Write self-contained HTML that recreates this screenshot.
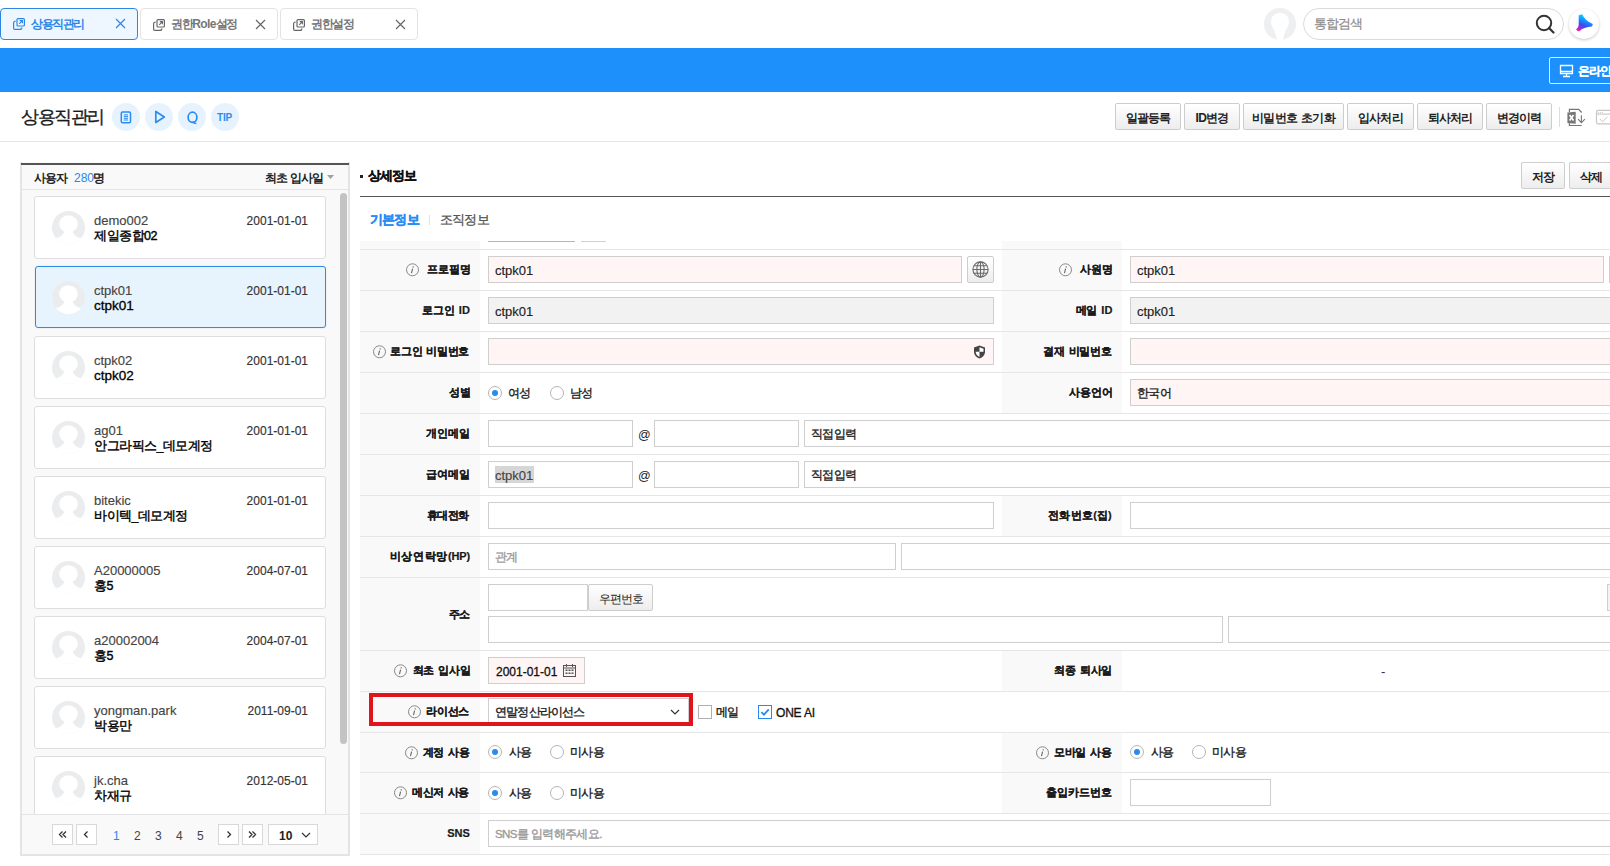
<!DOCTYPE html>
<html><head><meta charset="utf-8"><style>
*{box-sizing:border-box;margin:0;padding:0}
html,body{width:1610px;height:866px;overflow:hidden;background:#fff}
body{position:relative;font-family:"Liberation Sans",sans-serif;font-size:13px;color:#222}
.a{position:absolute}
.t{position:absolute;white-space:nowrap;line-height:1}
.tab{position:absolute;top:8px;height:32px;width:138px;border:1px solid #e3e3e3;border-radius:4px;background:#fff}
.tab.on{border:1.5px solid #2f86e0;background:#eef6ff}
.circ{position:absolute;top:103px;width:28px;height:28px;border-radius:50%;background:#e6f3fe}
.btn{position:absolute;height:27px;border:1px solid #cdcdcd;border-radius:2px;background:linear-gradient(#ffffff,#ededed);font-size:12px;font-weight:bold;color:#222;text-align:center;line-height:29px;letter-spacing:-0.8px;word-spacing:1.5px;white-space:nowrap}
.card{position:absolute;left:34px;width:292px;height:63px;background:#fff;border:1px solid #dedede;border-radius:3px}
.card.on{background:#e8f4fd;border:1px solid #2f8ae6;box-shadow:0 0 2px rgba(0,0,0,.12);margin-left:1px;width:291px;height:62px}
.card.on svg{left:16px}
.card.on .id,.card.on .nm{left:58px}
.card svg{position:absolute;left:17px;top:14px}
.card .id{position:absolute;left:59px;top:17px;font-size:13px;color:#444;-webkit-text-stroke:0.15px #444;line-height:1;white-space:nowrap}
.card .nm{position:absolute;left:59px;top:33px;font-size:12.5px;color:#000;-webkit-text-stroke:0.4px #000;line-height:1;letter-spacing:-0.5px;white-space:nowrap}
.card .nm.l{font-size:13.5px;letter-spacing:0;top:32px;-webkit-text-stroke:0.3px #000}
.card .dt{position:absolute;right:17px;top:18px;font-size:12px;color:#333;-webkit-text-stroke:0.15px #333;line-height:1}
.pg{position:absolute;top:824px;width:21px;height:21px;border:1px solid #d8d8d8;background:#fff}
.pn{position:absolute;top:830px;font-size:12px;color:#444;line-height:1}
.lt{position:absolute;font-size:11px;font-weight:bold;color:#1a1a1a;line-height:1;white-space:nowrap;letter-spacing:-0.7px;word-spacing:1.5px;-webkit-text-stroke:0.2px #1a1a1a}
.in{position:absolute;height:27px;border:1px solid #cfcfcf;background:#fff}
.in.rq{background:#fff5f5}
.in.ds{background:#f2f2f2}
.vt{position:absolute;font-size:13px;color:#1a1a1a;line-height:1;white-space:nowrap;-webkit-text-stroke:0.15px currentColor}
.vk{position:absolute;font-size:11.5px;color:#1a1a1a;line-height:1;white-space:nowrap;letter-spacing:-0.6px;-webkit-text-stroke:0.35px currentColor}
.rad{position:absolute;width:14px;height:14px;border:1px solid #b5b5b5;border-radius:50%;background:#fff}
.rad.on:after{content:"";position:absolute;left:3px;top:3px;width:6px;height:6px;border-radius:50%;background:#2a8af0}
</style></head><body>
<div class="tab on" style="left:0"><svg class="a" style="left:12px;top:9px" width="12" height="12" viewBox="0 0 12 12"><rect x="4" y="0.6" width="7.4" height="7.4" rx="1" fill="none" stroke="#2c86e8" stroke-width="1.2"/><path d="M2.6 3.2 Q0.6 3.2 0.6 5v5.2q0 1.2 1.2 1.2H7q1.8 0 1.8-2" fill="none" stroke="#2c86e8" stroke-width="1.2"/><path d="M6.2 5.8l3-3 M6.8 2.6h2.6v2.6" fill="none" stroke="#2c86e8" stroke-width="1.1"/></svg><span class="t" style="left:30px;top:9px;font-size:12px;color:#2c86e8;font-weight:bold;letter-spacing:-1.5px">상용직관리</span><svg class="a" style="left:114px;top:9px" width="11" height="11" viewBox="0 0 11 11"><path d="M1 1l9 9M10 1l-9 9" stroke="#2c86e8" stroke-width="1.2"/></svg></div>
<div class="tab" style="left:140px"><svg class="a" style="left:12px;top:10px" width="12" height="12" viewBox="0 0 12 12"><rect x="4" y="0.6" width="7.4" height="7.4" rx="1" fill="none" stroke="#666" stroke-width="1.2"/><path d="M2.6 3.2 Q0.6 3.2 0.6 5v5.2q0 1.2 1.2 1.2H7q1.8 0 1.8-2" fill="none" stroke="#666" stroke-width="1.2"/><path d="M6.2 5.8l3-3 M6.8 2.6h2.6v2.6" fill="none" stroke="#666" stroke-width="1.1"/></svg><span class="t" style="left:30px;top:9px;font-size:12px;color:#777;font-weight:bold;letter-spacing:-1.4px">권한<span style="letter-spacing:-0.6px">Role</span>설정</span><svg class="a" style="left:114px;top:10px" width="11" height="11" viewBox="0 0 11 11"><path d="M1 1l9 9M10 1l-9 9" stroke="#666" stroke-width="1.2"/></svg></div>
<div class="tab" style="left:280px"><svg class="a" style="left:12px;top:10px" width="12" height="12" viewBox="0 0 12 12"><rect x="4" y="0.6" width="7.4" height="7.4" rx="1" fill="none" stroke="#666" stroke-width="1.2"/><path d="M2.6 3.2 Q0.6 3.2 0.6 5v5.2q0 1.2 1.2 1.2H7q1.8 0 1.8-2" fill="none" stroke="#666" stroke-width="1.2"/><path d="M6.2 5.8l3-3 M6.8 2.6h2.6v2.6" fill="none" stroke="#666" stroke-width="1.1"/></svg><span class="t" style="left:30px;top:9px;font-size:12px;color:#777;font-weight:bold;letter-spacing:-1.4px">권한설정</span><svg class="a" style="left:114px;top:10px" width="11" height="11" viewBox="0 0 11 11"><path d="M1 1l9 9M10 1l-9 9" stroke="#666" stroke-width="1.2"/></svg></div>
<svg class="a" style="left:1264px;top:8px" width="32" height="32" viewBox="0 0 32 32"><defs><clipPath id="cc"><circle cx="16" cy="16" r="16"/></clipPath></defs><circle cx="16" cy="16" r="16" fill="#eeeff1"/><g clip-path="url(#cc)" fill="#fff"><path d="M16 5C21 5 25 8.5 25 13.5C25 17 23.5 19 22 22C20.5 25 19.5 28 19.5 33L12.5 33C12.5 28 11.5 25 10 22C8.5 19 7 17 7 13.5C7 8.5 11 5 16 5z"/></g></svg>
<div class="a" style="left:1303px;top:8px;width:261px;height:32px;border:1px solid #dadada;border-radius:16px;background:#fff"></div>
<span class="t" style="left:1314px;top:17px;font-size:13px;color:#8c8c8c;letter-spacing:-0.9px;-webkit-text-stroke:0.2px #8c8c8c;">통합검색</span>
<svg class="a" style="left:1534px;top:13px" width="22" height="22" viewBox="0 0 22 22"><circle cx="10" cy="10" r="7.2" fill="none" stroke="#333" stroke-width="2"/><path d="M15 15l4.5 4.5" stroke="#333" stroke-width="2.2" stroke-linecap="round"/></svg>
<div class="a" style="left:1569px;top:9px;width:30px;height:30px;border-radius:50%;background:#fff;box-shadow:0 1px 3px rgba(0,0,0,.22)"></div>
<svg class="a" style="left:1574px;top:14px" width="20" height="20" viewBox="0 0 20 20"><defs><linearGradient id="lg1" x1="0.55" y1="0" x2="0.15" y2="1"><stop offset="0" stop-color="#00eaff"/><stop offset=".38" stop-color="#1e86ff"/><stop offset=".6" stop-color="#3550f2"/><stop offset=".82" stop-color="#a82ad8"/><stop offset="1" stop-color="#ff1f8a"/></linearGradient></defs><path d="M4.7 1.6 Q6.5 0 8.4 0.6 Q11 7 18.8 9.9 Q18.5 12 17.7 12.5 Q10 13 5.3 17.2 Q3.5 17.5 2.1 15.6 Q4.7 13 4.7 11 z" fill="url(#lg1)"/></svg>
<div class="a" style="left:0px;top:48px;width:1610px;height:44px;background:#1e90fb;"></div>
<div class="a" style="left:1549px;top:57px;width:80px;height:27px;border:1px solid rgba(255,255,255,.85);border-radius:2px"></div>
<svg class="a" style="left:1559px;top:64px" width="15" height="14" viewBox="0 0 15 14"><path d="M1.5 1.5h12v8h-12z" fill="none" stroke="#fff" stroke-width="1.3"/><path d="M1.5 7.5h12 M7.5 9.5v3 M4 12.5h7" fill="none" stroke="#fff" stroke-width="1.3"/></svg>
<span class="t" style="left:1578px;top:65px;font-size:12px;color:#fff;font-weight:bold;letter-spacing:-1px;-webkit-text-stroke:0.2px #fff;">온라인</span>
<span class="t" style="left:21px;top:108px;font-size:18px;color:#1a1a1a;letter-spacing:-1.5px;-webkit-text-stroke:0.35px #1a1a1a;">상용직관리</span>
<div class="circ" style="left:112px"><svg class="a" style="left:8px;top:8px" width="12" height="14" viewBox="0 0 12 14"><rect x="1.3" y="0.9" width="9.2" height="10.9" rx="1.3" fill="none" stroke="#2a8cf0" stroke-width="1.5"/><path d="M3.8 3.9h4.2M3.8 5.6h4.2M3.8 7.3h4.2M3.8 9h4.2" stroke="#2a8cf0" stroke-width="1"/></svg></div>
<div class="circ" style="left:145px"><svg class="a" style="left:9px;top:7px" width="12" height="14" viewBox="0 0 12 14"><path d="M1.8 1.5v11l8.5-5.5z" fill="none" stroke="#2a8cf0" stroke-width="1.7" stroke-linejoin="round"/></svg></div>
<div class="circ" style="left:178px"><svg class="a" style="left:7px;top:7px" width="14" height="15" viewBox="0 0 14 15"><ellipse cx="7.5" cy="7.3" rx="4.4" ry="5.1" fill="none" stroke="#2a8cf0" stroke-width="1.7"/><path d="M7.5 11.8q1.5 1.7 3.8 1.7" fill="none" stroke="#2a8cf0" stroke-width="1.5"/></svg></div>
<div class="circ" style="left:211px"><span class="t" style="left:6px;top:10px;font-size:10px;font-weight:bold;color:#2a8cf0;letter-spacing:-0.2px">TIP</span></div>
<div class="btn" style="left:1115px;top:103px;width:66px">일괄등록</div>
<div class="btn" style="left:1184px;top:103px;width:56px">ID변경</div>
<div class="btn" style="left:1243px;top:103px;width:101px">비밀번호 초기화</div>
<div class="btn" style="left:1347px;top:103px;width:67px">입사처리</div>
<div class="btn" style="left:1417px;top:103px;width:66px">퇴사처리</div>
<div class="btn" style="left:1486px;top:103px;width:66px">변경이력</div>
<div class="a" style="left:1559px;top:107px;width:1px;height:20px;background:#dcdcdc;"></div>
<svg class="a" style="left:1566px;top:108px" width="20" height="19" viewBox="0 0 20 19"><path d="M3.4 4V1.3H12.7L15.7 4.5M3.4 14V17.5H15.7" fill="none" stroke="#777" stroke-width="1.2"/><path d="M1.4 4.4L9.7 3.7V15.7L1.4 15z" fill="#777"/><path d="M3.6 6.9L7.5 12.4M7.5 6.9L3.6 12.4" stroke="#fff" stroke-width="1.7"/><path d="M15.4 7.2V14.6M12.1 11.2L15.4 14.6L18.9 11.2" fill="none" stroke="#777" stroke-width="1.1"/></svg>
<svg class="a" style="left:1595px;top:109px" width="15" height="17" viewBox="0 0 15 17"><rect x="1.5" y="1.3" width="20" height="13.5" rx="1.5" fill="none" stroke="#c6c6c6" stroke-width="1.2"/><path d="M1.5 5.1H21.5" stroke="#c6c6c6" stroke-width="1.1"/><g fill="#c6c6c6"><circle cx="3.5" cy="3.3" r="0.6"/><circle cx="5.5" cy="3.3" r="0.6"/><circle cx="7.5" cy="3.3" r="0.6"/></g><path d="M4.9 10L7.5 12.8L12.4 8" fill="none" stroke="#c6c6c6" stroke-width="1"/></svg>
<div class="a" style="left:0px;top:141px;width:1610px;height:1px;background:#e6e6e6;"></div>
<div class="a" style="left:20px;top:162px;width:330px;height:694px;background:#f9f9f9;"></div>
<div class="a" style="left:20px;top:162px;width:2px;height:694px;background:#e4e4e4;"></div>
<div class="a" style="left:348px;top:162px;width:2px;height:694px;background:#e4e4e4;"></div>
<div class="a" style="left:20px;top:854px;width:330px;height:2px;background:#e4e4e4;"></div>
<div class="a" style="left:21px;top:163px;width:328px;height:2px;background:#555;"></div>
<span class="t" style="left:34px;top:172px;font-size:12px;color:#222;font-weight:bold;letter-spacing:-0.9px;">사용자</span>
<span class="t" style="left:74px;top:172px;font-size:12px;color:#2c86e8;">280</span>
<span class="t" style="left:93px;top:172px;font-size:12px;color:#222;font-weight:bold;">명</span>
<span class="t" style="left:265px;top:172px;font-size:12px;color:#222;font-weight:bold;letter-spacing:-0.9px;">최초 입사일</span>
<svg class="a" style="left:327px;top:175px" width="7" height="4" viewBox="0 0 7 4"><path d="M0 0h7L3.5 4z" fill="#a0a0a0"/></svg>
<div class="a" style="left:22px;top:189px;width:326px;height:1px;background:#e4e4e4;"></div>
<div class="a" style="left:0;top:190px;width:340px;height:624px;overflow:hidden">
<div class="card" style="top:6px"><svg width="33" height="33" viewBox="0 0 32 32"><defs><clipPath id="ac"><circle cx="16" cy="16" r="16"/></clipPath></defs><circle cx="16" cy="16" r="16" fill="#ebecee"/><g fill="#fff" clip-path="url(#ac)"><ellipse cx="16" cy="12.5" rx="9" ry="8.5"/><path d="M12.5 19 L19.5 19 Q21 24 27 26.5 L5 26.5 Q11 24 12.5 19z"/><rect x="0" y="26" width="32" height="7"/></g></svg><span class="id">demo002</span><span class="nm">제일종합02</span><span class="dt">2001-01-01</span></div>
<div class="card on" style="top:76px"><svg width="33" height="33" viewBox="0 0 32 32"><defs><clipPath id="ac"><circle cx="16" cy="16" r="16"/></clipPath></defs><circle cx="16" cy="16" r="16" fill="#ebecee"/><g fill="#fff" clip-path="url(#ac)"><ellipse cx="16" cy="12.5" rx="9" ry="8.5"/><path d="M12.5 19 L19.5 19 Q21 24 27 26.5 L5 26.5 Q11 24 12.5 19z"/><rect x="0" y="26" width="32" height="7"/></g></svg><span class="id">ctpk01</span><span class="nm l">ctpk01</span><span class="dt">2001-01-01</span></div>
<div class="card" style="top:146px"><svg width="33" height="33" viewBox="0 0 32 32"><defs><clipPath id="ac"><circle cx="16" cy="16" r="16"/></clipPath></defs><circle cx="16" cy="16" r="16" fill="#ebecee"/><g fill="#fff" clip-path="url(#ac)"><ellipse cx="16" cy="12.5" rx="9" ry="8.5"/><path d="M12.5 19 L19.5 19 Q21 24 27 26.5 L5 26.5 Q11 24 12.5 19z"/><rect x="0" y="26" width="32" height="7"/></g></svg><span class="id">ctpk02</span><span class="nm l">ctpk02</span><span class="dt">2001-01-01</span></div>
<div class="card" style="top:216px"><svg width="33" height="33" viewBox="0 0 32 32"><defs><clipPath id="ac"><circle cx="16" cy="16" r="16"/></clipPath></defs><circle cx="16" cy="16" r="16" fill="#ebecee"/><g fill="#fff" clip-path="url(#ac)"><ellipse cx="16" cy="12.5" rx="9" ry="8.5"/><path d="M12.5 19 L19.5 19 Q21 24 27 26.5 L5 26.5 Q11 24 12.5 19z"/><rect x="0" y="26" width="32" height="7"/></g></svg><span class="id">ag01</span><span class="nm">안그라픽스_데모계정</span><span class="dt">2001-01-01</span></div>
<div class="card" style="top:286px"><svg width="33" height="33" viewBox="0 0 32 32"><defs><clipPath id="ac"><circle cx="16" cy="16" r="16"/></clipPath></defs><circle cx="16" cy="16" r="16" fill="#ebecee"/><g fill="#fff" clip-path="url(#ac)"><ellipse cx="16" cy="12.5" rx="9" ry="8.5"/><path d="M12.5 19 L19.5 19 Q21 24 27 26.5 L5 26.5 Q11 24 12.5 19z"/><rect x="0" y="26" width="32" height="7"/></g></svg><span class="id">bitekic</span><span class="nm">바이텍_데모계정</span><span class="dt">2001-01-01</span></div>
<div class="card" style="top:356px"><svg width="33" height="33" viewBox="0 0 32 32"><defs><clipPath id="ac"><circle cx="16" cy="16" r="16"/></clipPath></defs><circle cx="16" cy="16" r="16" fill="#ebecee"/><g fill="#fff" clip-path="url(#ac)"><ellipse cx="16" cy="12.5" rx="9" ry="8.5"/><path d="M12.5 19 L19.5 19 Q21 24 27 26.5 L5 26.5 Q11 24 12.5 19z"/><rect x="0" y="26" width="32" height="7"/></g></svg><span class="id">A20000005</span><span class="nm">홍5</span><span class="dt">2004-07-01</span></div>
<div class="card" style="top:426px"><svg width="33" height="33" viewBox="0 0 32 32"><defs><clipPath id="ac"><circle cx="16" cy="16" r="16"/></clipPath></defs><circle cx="16" cy="16" r="16" fill="#ebecee"/><g fill="#fff" clip-path="url(#ac)"><ellipse cx="16" cy="12.5" rx="9" ry="8.5"/><path d="M12.5 19 L19.5 19 Q21 24 27 26.5 L5 26.5 Q11 24 12.5 19z"/><rect x="0" y="26" width="32" height="7"/></g></svg><span class="id">a20002004</span><span class="nm">홍5</span><span class="dt">2004-07-01</span></div>
<div class="card" style="top:496px"><svg width="33" height="33" viewBox="0 0 32 32"><defs><clipPath id="ac"><circle cx="16" cy="16" r="16"/></clipPath></defs><circle cx="16" cy="16" r="16" fill="#ebecee"/><g fill="#fff" clip-path="url(#ac)"><ellipse cx="16" cy="12.5" rx="9" ry="8.5"/><path d="M12.5 19 L19.5 19 Q21 24 27 26.5 L5 26.5 Q11 24 12.5 19z"/><rect x="0" y="26" width="32" height="7"/></g></svg><span class="id">yongman.park</span><span class="nm">박용만</span><span class="dt">2011-09-01</span></div>
<div class="card" style="top:566px"><svg width="33" height="33" viewBox="0 0 32 32"><defs><clipPath id="ac"><circle cx="16" cy="16" r="16"/></clipPath></defs><circle cx="16" cy="16" r="16" fill="#ebecee"/><g fill="#fff" clip-path="url(#ac)"><ellipse cx="16" cy="12.5" rx="9" ry="8.5"/><path d="M12.5 19 L19.5 19 Q21 24 27 26.5 L5 26.5 Q11 24 12.5 19z"/><rect x="0" y="26" width="32" height="7"/></g></svg><span class="id">jk.cha</span><span class="nm">차재규</span><span class="dt">2012-05-01</span></div>
</div>
<div class="a" style="left:340px;top:193px;width:7px;height:551px;background:#c3c3c3;border-radius:4px"></div>
<div class="a" style="left:22px;top:814px;width:326px;height:1px;background:#e4e4e4;"></div>
<div class="pg" style="left:52px"><svg class="a" style="left:4px;top:4px" width="11" height="11" viewBox="0 0 11 11"><path d="M5.5 2.5L2.5 5.5l3 3M9 2.5L6 5.5l3 3" fill="none" stroke="#333" stroke-width="1.3"/></svg></div>
<div class="pg" style="left:76px"><svg class="a" style="left:4px;top:4px" width="11" height="11" viewBox="0 0 11 11"><path d="M6.5 2.5l-3 3 3 3" fill="none" stroke="#333" stroke-width="1.3"/></svg></div>
<div class="pg" style="left:218px"><svg class="a" style="left:4px;top:4px" width="11" height="11" viewBox="0 0 11 11"><path d="M4.5 2.5l3 3-3 3" fill="none" stroke="#333" stroke-width="1.3"/></svg></div>
<div class="pg" style="left:242px"><svg class="a" style="left:4px;top:4px" width="11" height="11" viewBox="0 0 11 11"><path d="M2 2.5l3 3-3 3M5.5 2.5l3 3-3 3" fill="none" stroke="#333" stroke-width="1.3"/></svg></div>
<span class="pn" style="left:113px;color:#2c86e8">1</span>
<span class="pn" style="left:134px;color:#444">2</span>
<span class="pn" style="left:155px;color:#444">3</span>
<span class="pn" style="left:176px;color:#444">4</span>
<span class="pn" style="left:197px;color:#444">5</span>
<div class="pg" style="left:268px;width:50px"><span class="t" style="left:10px;top:5px;font-size:12px;font-weight:bold;color:#222">10</span><svg class="a" style="left:32px;top:7px" width="10" height="6" viewBox="0 0 10 6"><path d="M1 1l4 4 4-4" fill="none" stroke="#333" stroke-width="1.2"/></svg></div>
<div class="a" style="left:360px;top:175px;width:3px;height:3px;background:#222;"></div>
<span class="t" style="left:368px;top:169px;font-size:13px;color:#111;font-weight:bold;letter-spacing:-0.9px;-webkit-text-stroke:0.3px #111;">상세정보</span>
<div class="btn" style="left:1521px;top:162px;width:44px;height:27px">저장</div>
<div class="btn" style="left:1569px;top:162px;width:44px;height:27px">삭제</div>
<div class="a" style="left:360px;top:196px;width:1250px;height:1px;background:#555;"></div>
<span class="t" style="left:370px;top:213px;font-size:13px;color:#2a8cf5;font-weight:bold;letter-spacing:-0.8px;-webkit-text-stroke:0.3px #2a8cf5;">기본정보</span>
<div class="a" style="left:429px;top:215px;width:1px;height:10px;background:#e2e2e2;"></div>
<span class="t" style="left:440px;top:213px;font-size:13px;color:#555;letter-spacing:-0.8px;-webkit-text-stroke:0.3px #555;">조직정보</span>
<div class="a" style="left:360px;top:241px;width:120px;height:613px;background:#f9f9f9;"></div>
<div class="a" style="left:1002px;top:250px;width:120px;height:40px;background:#f9f9f9;"></div>
<div class="a" style="left:1002px;top:291px;width:120px;height:40px;background:#f9f9f9;"></div>
<div class="a" style="left:1002px;top:332px;width:120px;height:40px;background:#f9f9f9;"></div>
<div class="a" style="left:1002px;top:373px;width:120px;height:40px;background:#f9f9f9;"></div>
<div class="a" style="left:1002px;top:496px;width:120px;height:40px;background:#f9f9f9;"></div>
<div class="a" style="left:1002px;top:651px;width:120px;height:40px;background:#f9f9f9;"></div>
<div class="a" style="left:1002px;top:733px;width:120px;height:39px;background:#f9f9f9;"></div>
<div class="a" style="left:1002px;top:773px;width:120px;height:40px;background:#f9f9f9;"></div>
<div class="a" style="left:1002px;top:241px;width:120px;height:8px;background:#f9f9f9;"></div>
<div class="a" style="left:488px;top:241px;width:87px;height:1px;background:#b5b5b5;"></div>
<div class="a" style="left:581px;top:241px;width:25px;height:1px;background:#d0d0d0;"></div>
<div class="a" style="left:360px;top:249px;width:1250px;height:1px;background:#e6e6e6;"></div>
<div class="a" style="left:360px;top:290px;width:1250px;height:1px;background:#e6e6e6;"></div>
<div class="a" style="left:360px;top:331px;width:1250px;height:1px;background:#e6e6e6;"></div>
<div class="a" style="left:360px;top:372px;width:1250px;height:1px;background:#e6e6e6;"></div>
<div class="a" style="left:360px;top:413px;width:1250px;height:1px;background:#e6e6e6;"></div>
<div class="a" style="left:360px;top:454px;width:1250px;height:1px;background:#e6e6e6;"></div>
<div class="a" style="left:360px;top:495px;width:1250px;height:1px;background:#e6e6e6;"></div>
<div class="a" style="left:360px;top:536px;width:1250px;height:1px;background:#e6e6e6;"></div>
<div class="a" style="left:360px;top:577px;width:1250px;height:1px;background:#e6e6e6;"></div>
<div class="a" style="left:360px;top:650px;width:1250px;height:1px;background:#e6e6e6;"></div>
<div class="a" style="left:360px;top:691px;width:1250px;height:1px;background:#e6e6e6;"></div>
<div class="a" style="left:360px;top:732px;width:1250px;height:1px;background:#e6e6e6;"></div>
<div class="a" style="left:360px;top:772px;width:1250px;height:1px;background:#e6e6e6;"></div>
<div class="a" style="left:360px;top:813px;width:1250px;height:1px;background:#e6e6e6;"></div>
<div class="a" style="left:360px;top:854px;width:1250px;height:1px;background:#e6e6e6;"></div>
<span class="lt" style="right:1139.36px;top:264px;letter-spacing:-0.02px">프로필명</span>
<svg class="a" style="left:406px;top:262.5px" width="14" height="14" viewBox="0 0 14 14"><circle cx="6.5" cy="6.8" r="6" fill="none" stroke="#888" stroke-width="1"/><path d="M7.3 3.3l-0.15 1" stroke="#666" stroke-width="1.3"/><path d="M6.6 5.6l-1.1 4.6" stroke="#666" stroke-width="1.1"/></svg>
<div class="in rq" style="left:488px;top:256px;width:474px;height:27px"></div>
<span class="vt" style="left:495px;top:264px;color:#222">ctpk01</span>
<div class="btn" style="left:967px;top:256px;width:27px;height:27px"></div>
<svg class="a" style="left:971px;top:260px" width="19" height="19" viewBox="0 0 19 19"><g fill="none" stroke="#6a6a6a" stroke-width="1.1"><circle cx="9.5" cy="9.5" r="7.6"/><ellipse cx="9.5" cy="9.5" rx="3.6" ry="7.6"/><path d="M1.9 9.5h15.2M3 5.7h13M3 13.3h13M9.5 1.9v15.2"/></g></svg>
<span class="lt" style="right:496.8800000000003px;top:264px;letter-spacing:0.06px">사원명</span>
<svg class="a" style="left:1059px;top:262.5px" width="14" height="14" viewBox="0 0 14 14"><circle cx="6.5" cy="6.8" r="6" fill="none" stroke="#888" stroke-width="1"/><path d="M7.3 3.3l-0.15 1" stroke="#666" stroke-width="1.3"/><path d="M6.6 5.6l-1.1 4.6" stroke="#666" stroke-width="1.1"/></svg>
<div class="in rq" style="left:1130px;top:256px;width:474px;height:27px"></div>
<span class="vt" style="left:1137px;top:264px;color:#222">ctpk01</span>
<div class="in" style="left:1609px;top:256px;width:10px;height:27px;background:#f3f3f3"></div>
<span class="lt" style="right:1140.1599999999999px;top:305px;letter-spacing:-0.276px">로그인 <span style="letter-spacing:0">ID</span></span>
<div class="in ds" style="left:488px;top:297px;width:506px;height:27px"></div>
<span class="vt" style="left:495px;top:305px;color:#222">ctpk01</span>
<span class="lt" style="right:497.6800000000003px;top:305px;letter-spacing:-0.339px">메일 <span style="letter-spacing:0">ID</span></span>
<div class="in ds" style="left:1130px;top:297px;width:490px;height:27px"></div>
<span class="vt" style="left:1137px;top:305px;color:#222">ctpk01</span>
<span class="lt" style="right:1140.9599999999998px;top:346px;letter-spacing:-0.341px">로그인 비밀번호</span>
<svg class="a" style="left:373px;top:344.5px" width="14" height="14" viewBox="0 0 14 14"><circle cx="6.5" cy="6.8" r="6" fill="none" stroke="#888" stroke-width="1"/><path d="M7.3 3.3l-0.15 1" stroke="#666" stroke-width="1.3"/><path d="M6.6 5.6l-1.1 4.6" stroke="#666" stroke-width="1.1"/></svg>
<div class="in rq" style="left:488px;top:338px;width:506px;height:27px"></div>
<svg class="a" style="left:973px;top:345px" width="13" height="14" viewBox="0 0 13 14"><path d="M6.5 0.6L12 2.6v4.2c0 3.3-2.4 5.7-5.5 6.7C3.4 12.5 1 10.1 1 6.8V2.6z" fill="#444"/><path d="M6.5 2.3l4 1.5v3H6.5z M6.5 6.8v5.1C4.5 11 2.8 9.3 2.6 6.8z" fill="#fff"/></svg>
<span class="lt" style="right:498.4800000000003px;top:346px;letter-spacing:-0.314px">결재 비밀번호</span>
<div class="in rq" style="left:1130px;top:338px;width:490px;height:27px"></div>
<span class="lt" style="right:1138.5599999999997px;top:387px;letter-spacing:0.46px">성별</span>
<div class="rad on" style="left:488px;top:386px"></div>
<span class="vk" style="left:508px;top:388px">여성</span>
<div class="rad" style="left:550px;top:386px"></div>
<span class="vk" style="left:570px;top:388px">남성</span>
<span class="lt" style="right:496.8800000000003px;top:387px;letter-spacing:0.087px">사용언어</span>
<div class="in rq" style="left:1130px;top:379px;width:490px;height:27px"></div>
<span class="vk" style="left:1137px;top:388px;color:#222">한국어</span>
<span class="lt" style="right:1139.36px;top:428px;letter-spacing:0.141px">개인메일</span>
<div class="in " style="left:488px;top:420px;width:145px;height:27px"></div>
<span class="t" style="left:638px;top:429px;font-size:12.5px;color:#222;">@</span>
<div class="in " style="left:654px;top:420px;width:145px;height:27px"></div>
<div class="in " style="left:804px;top:420px;width:816px;height:27px"></div>
<span class="vk" style="left:811px;top:429px;color:#222">직접입력</span>
<span class="lt" style="right:1139.36px;top:469px;letter-spacing:0.141px">급여메일</span>
<div class="in " style="left:488px;top:461px;width:145px;height:27px"></div>
<div class="a" style="left:495px;top:466px;width:39px;height:17px;background:#d6d6d6;"></div>
<span class="vt" style="left:495px;top:469px;color:#444">ctpk01</span>
<span class="t" style="left:638px;top:470px;font-size:12.5px;color:#222;">@</span>
<div class="in " style="left:654px;top:461px;width:145px;height:27px"></div>
<div class="in " style="left:804px;top:461px;width:816px;height:27px"></div>
<span class="vk" style="left:811px;top:470px;color:#222">직접입력</span>
<span class="lt" style="right:1140.9599999999998px;top:510px;letter-spacing:-0.393px">휴대전화</span>
<div class="in " style="left:488px;top:502px;width:506px;height:27px"></div>
<span class="lt" style="right:498.4800000000003px;top:510px;letter-spacing:0.3px">전화번호<span style="letter-spacing:-0.2px">(</span>집<span style="letter-spacing:-0.2px">)</span></span>
<div class="in " style="left:1130px;top:502px;width:490px;height:27px"></div>
<span class="lt" style="right:1140.1599999999999px;top:551px;letter-spacing:0.64px">비상연락망<span style="letter-spacing:-0.2px">(HP)</span></span>
<div class="in " style="left:488px;top:543px;width:408px;height:27px"></div>
<span class="vk" style="left:495px;top:552px;color:#9a9a9a">관계</span>
<div class="in " style="left:901px;top:543px;width:719px;height:27px"></div>
<span class="lt" style="right:1140.8px;top:609px">주소</span>
<div class="in " style="left:488px;top:584px;width:100px;height:27px"></div>
<div class="btn" style="left:588px;top:584px;width:65px;height:27px;font-weight:normal;letter-spacing:-1px">우편번호</div>
<div class="in " style="left:488px;top:616px;width:735px;height:27px"></div>
<div class="in " style="left:1228px;top:616px;width:392px;height:27px"></div>
<div class="in" style="left:1607px;top:584px;width:10px;height:27px;background:#f3f3f3"></div>
<span class="lt" style="right:1139.36px;top:665px;letter-spacing:-0.244px">최초 입사일</span>
<svg class="a" style="left:394px;top:663.5px" width="14" height="14" viewBox="0 0 14 14"><circle cx="6.5" cy="6.8" r="6" fill="none" stroke="#888" stroke-width="1"/><path d="M7.3 3.3l-0.15 1" stroke="#666" stroke-width="1.3"/><path d="M6.6 5.6l-1.1 4.6" stroke="#666" stroke-width="1.1"/></svg>
<div class="in rq" style="left:488px;top:657px;width:97px;height:27px"></div>
<span class="t" style="left:496px;top:666px;font-size:12px;color:#111;-webkit-text-stroke:0.3px #111;">2001-01-01</span>
<svg class="a" style="left:562px;top:663px" width="15" height="15" viewBox="0 0 15 15"><g fill="none" stroke="#555" stroke-width="1"><rect x="1.5" y="2.5" width="12" height="11"/><path d="M1.5 5h12M4.5 1v3M10.5 1v3"/></g><g fill="#555"><rect x="3.5" y="6.5" width="2" height="1.5"/><rect x="6.5" y="6.5" width="2" height="1.5"/><rect x="9.5" y="6.5" width="2" height="1.5"/><rect x="3.5" y="9.5" width="2" height="1.5"/><rect x="6.5" y="9.5" width="2" height="1.5"/><rect x="9.5" y="9.5" width="2" height="1.5"/></g></svg>
<span class="lt" style="right:497.6800000000003px;top:665px;letter-spacing:-0.148px">최종 퇴사일</span>
<span class="t" style="left:1381px;top:665px;font-size:13px;color:#333;">-</span>
<span class="lt" style="right:1140.9599999999998px;top:706px;letter-spacing:-0.287px">라이선스</span>
<svg class="a" style="left:408px;top:704.5px" width="14" height="14" viewBox="0 0 14 14"><circle cx="6.5" cy="6.8" r="6" fill="none" stroke="#888" stroke-width="1"/><path d="M7.3 3.3l-0.15 1" stroke="#666" stroke-width="1.3"/><path d="M6.6 5.6l-1.1 4.6" stroke="#666" stroke-width="1.1"/></svg>
<div class="in" style="left:488px;top:698px;width:201px;height:26px"></div>
<span class="vk" style="left:495px;top:707px;letter-spacing:-0.8px">연말정산라이선스</span>
<svg class="a" style="left:670px;top:709px" width="10" height="6" viewBox="0 0 10 6"><path d="M1 1l4 4 4-4" fill="none" stroke="#333" stroke-width="1.2"/></svg>
<div class="a" style="left:369px;top:693px;width:324px;height:33px;background:transparent;border:4px solid #e0141c"></div>
<div class="a" style="left:698px;top:705px;width:14px;height:14px;border:1px solid #b0b0b0;background:#fff"></div>
<span class="vk" style="left:716px;top:707px">메일</span>
<div class="a" style="left:758px;top:705px;width:14px;height:14px;border:1px solid #2a8af0;background:#fff"></div>
<svg class="a" style="left:759px;top:706px" width="12" height="12" viewBox="0 0 12 12"><path d="M2.4 6.2l2.5 2.5L9.8 3.4" fill="none" stroke="#2a8af0" stroke-width="1.8"/></svg>
<span class="t" style="left:776px;top:707px;font-size:12px;color:#111;letter-spacing:-0.2px;-webkit-text-stroke:0.3px #111;">ONE AI</span>
<span class="lt" style="right:1140.9599999999998px;top:747px;letter-spacing:-0.5px">계정 사용</span>
<svg class="a" style="left:405px;top:745.5px" width="14" height="14" viewBox="0 0 14 14"><circle cx="6.5" cy="6.8" r="6" fill="none" stroke="#888" stroke-width="1"/><path d="M7.3 3.3l-0.15 1" stroke="#666" stroke-width="1.3"/><path d="M6.6 5.6l-1.1 4.6" stroke="#666" stroke-width="1.1"/></svg>
<div class="rad on" style="left:488px;top:745px"></div>
<span class="vk" style="left:509px;top:747px">사용</span>
<div class="rad" style="left:550px;top:745px"></div>
<span class="vk" style="left:570px;top:747px">미사용</span>
<span class="lt" style="right:498.4800000000003px;top:747px;letter-spacing:-0.308px">모바일 사용</span>
<svg class="a" style="left:1036px;top:745.5px" width="14" height="14" viewBox="0 0 14 14"><circle cx="6.5" cy="6.8" r="6" fill="none" stroke="#888" stroke-width="1"/><path d="M7.3 3.3l-0.15 1" stroke="#666" stroke-width="1.3"/><path d="M6.6 5.6l-1.1 4.6" stroke="#666" stroke-width="1.1"/></svg>
<div class="rad on" style="left:1130px;top:745px"></div>
<span class="vk" style="left:1151px;top:747px">사용</span>
<div class="rad" style="left:1192px;top:745px"></div>
<span class="vk" style="left:1212px;top:747px">미사용</span>
<span class="lt" style="right:1140.9599999999998px;top:787px;letter-spacing:-0.404px">메신저 사용</span>
<svg class="a" style="left:394px;top:785.5px" width="14" height="14" viewBox="0 0 14 14"><circle cx="6.5" cy="6.8" r="6" fill="none" stroke="#888" stroke-width="1"/><path d="M7.3 3.3l-0.15 1" stroke="#666" stroke-width="1.3"/><path d="M6.6 5.6l-1.1 4.6" stroke="#666" stroke-width="1.1"/></svg>
<div class="rad on" style="left:488px;top:786px"></div>
<span class="vk" style="left:509px;top:788px">사용</span>
<div class="rad" style="left:550px;top:786px"></div>
<span class="vk" style="left:570px;top:788px">미사용</span>
<span class="lt" style="right:498.4800000000003px;top:787px;letter-spacing:-0.02px">출입카드번호</span>
<div class="in " style="left:1130px;top:779px;width:141px;height:27px"></div>
<span class="lt" style="right:1140.1599999999999px;top:828px;letter-spacing:1.1px"><span style="letter-spacing:0">SNS</span></span>
<div class="in " style="left:488px;top:820px;width:1130px;height:27px"></div>
<span class="vk" style="left:495px;top:829px;color:#9a9a9a">SNS를 입력해주세요.</span>
</body></html>
